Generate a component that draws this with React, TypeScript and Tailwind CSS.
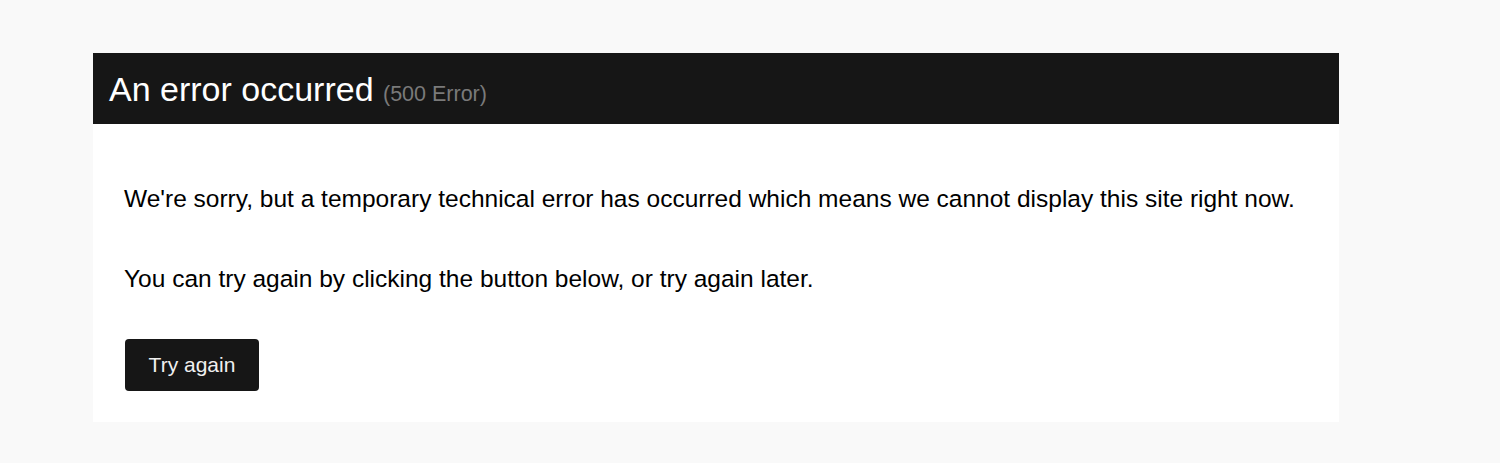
export default function App() {
  return (
    <div className="min-h-[463px] bg-[#f9f9f9] pt-[53px] pb-[41px] font-['Liberation_Sans',Arial,sans-serif]">
      <div className="ml-[93px] w-[1246px] bg-white">
        <div className="flex h-[71px] items-center bg-[#161616] px-4">
          <h1 className="text-[34px] leading-none text-white">
            An error occurred{' '}
            <span className="text-[21.5px] text-[#7a7a7a]">(500 Error)</span>
          </h1>
        </div>
        <div className="px-[31px] pt-[61px] pb-[31px] text-black">
          <p className="mb-[52px] text-[24.5px] leading-[28px]">
            We're sorry, but a temporary technical error has occurred which means we cannot display this site right now.
          </p>
          <p className="mb-[46px] text-[24.5px] leading-[28px]">
            You can try again by clicking the button below, or try again later.
          </p>
          <button className="ml-px h-[52px] w-[134px] rounded bg-[#161616] text-[21px] text-[#f0f0f0]">
            Try again
          </button>
        </div>
      </div>
    </div>
  );
}
